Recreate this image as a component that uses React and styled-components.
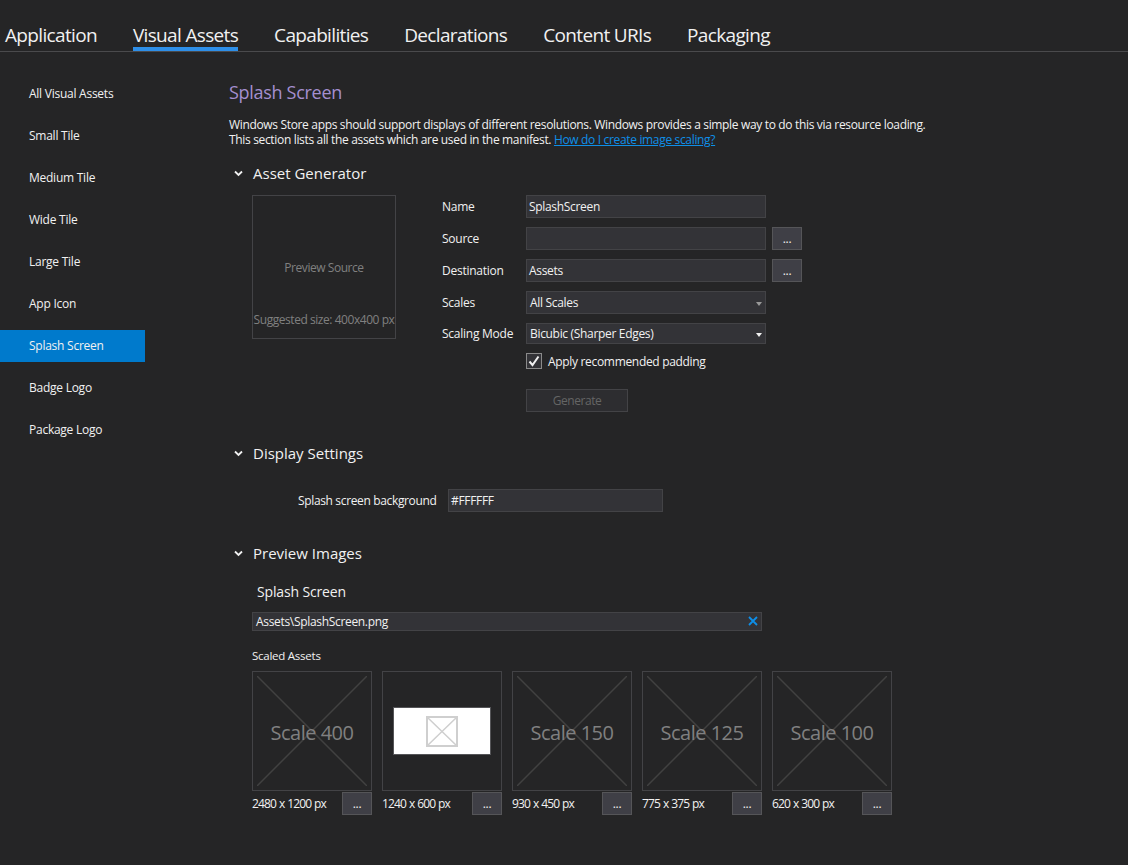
import React from "react";
import styled, { createGlobalStyle } from "styled-components";

const GlobalStyle = createGlobalStyle`
  html, body {
    margin: 0;
    background: #252526;
  }
  * {
    box-sizing: border-box;
  }
`;

const tabs = ["Application", "Visual Assets", "Capabilities", "Declarations", "Content URIs", "Packaging"];
const sideItems = [
  "All Visual Assets",
  "Small Tile",
  "Medium Tile",
  "Wide Tile",
  "Large Tile",
  "App Icon",
  "Splash Screen",
  "Badge Logo",
  "Package Logo",
];
const scaleTiles = [
  { scale: "Scale 400", size: "2480 x 1200 px" },
  { scale: null, size: "1240 x 600 px" },
  { scale: "Scale 150", size: "930 x 450 px" },
  { scale: "Scale 125", size: "775 x 375 px" },
  { scale: "Scale 100", size: "620 x 300 px" },
];

const Chevron = () => (
  <ChevronWrap width="9" height="7" viewBox="0 0 9 7">
    <path d="M1 1.5 L4.5 5 L8 1.5" fill="none" stroke="#f1f1f1" strokeWidth="1.8" />
  </ChevronWrap>
);

const Cross = ({ color }) => (
  <CrossSvg viewBox="0 0 100 100" preserveAspectRatio="none">
    <path d="M0 0 L100 100 M100 0 L0 100" stroke={color} strokeWidth="1.5" vectorEffect="non-scaling-stroke" fill="none" />
  </CrossSvg>
);

const Select = ({ value, dim }) => (
  <SelectBox $dim={dim}>
    {value}
    <Arrow $dim={dim} />
  </SelectBox>
);

export default function App() {
  return (
    <Page>
      <GlobalStyle />
      <TabBar>
        {tabs.map((t) => (
          <Tab key={t} $active={t === "Visual Assets"}>
            {t}
          </Tab>
        ))}
      </TabBar>
      <Body>
        <Sidebar>
          {sideItems.map((s) => (
            <SideItem key={s} $active={s === "Splash Screen"}>
              {s}
            </SideItem>
          ))}
        </Sidebar>
        <Main>
          <Title>Splash Screen</Title>
          <Description>
            Windows Store apps should support displays of different resolutions. Windows provides a simple way to do this via resource loading.
            <br />
            This section lists all the assets which are used in the manifest. <DocLink>How do I create image scaling?</DocLink>
          </Description>

          <SectionHead>
            <Chevron />
            Asset Generator
          </SectionHead>
          <Generator>
            <PreviewSource>
              <PreviewLabel>Preview Source</PreviewLabel>
              <SuggestedSize>Suggested size: 400x400 px</SuggestedSize>
            </PreviewSource>
            <FormGrid>
              <FieldLabel>Name</FieldLabel>
              <TextBox>SplashScreen</TextBox>
              <span />
              <FieldLabel>Source</FieldLabel>
              <TextBox />
              <BrowseButton>...</BrowseButton>
              <FieldLabel>Destination</FieldLabel>
              <TextBox>Assets</TextBox>
              <BrowseButton>...</BrowseButton>
              <FieldLabel>Scales</FieldLabel>
              <Select value="All Scales" dim />
              <span />
              <FieldLabel>Scaling Mode</FieldLabel>
              <Select value="Bicubic (Sharper Edges)" />
              <span />
              <span />
              <CheckRow>
                <CheckBox>
                  <svg width="14" height="14" viewBox="0 0 14 14">
                    <path d="M2.5 7.5 L5.5 11 L11.5 2.5" fill="none" stroke="#f1f1f1" strokeWidth="2" />
                  </svg>
                </CheckBox>
                Apply recommended padding
              </CheckRow>
              <span />
              <span />
              <GenerateButton>Generate</GenerateButton>
            </FormGrid>
          </Generator>

          <DisplayHead>
            <Chevron />
            Display Settings
          </DisplayHead>
          <BackgroundRow>
            <BackgroundLabel>Splash screen background</BackgroundLabel>
            <ColorBox>#FFFFFF</ColorBox>
          </BackgroundRow>

          <PreviewHead>
            <Chevron />
            Preview Images
          </PreviewHead>
          <PreviewBody>
            <SubTitle>Splash Screen</SubTitle>
            <FileBox>
              Assets\SplashScreen.png
              <ClearIcon width="10" height="10" viewBox="0 0 10 10">
                <path d="M1 1 L9 9 M9 1 L1 9" stroke="#0e8fe8" strokeWidth="1.8" fill="none" />
              </ClearIcon>
            </FileBox>
            <ScaledLabel>Scaled Assets</ScaledLabel>
            <TileRow>
              {scaleTiles.map((t) => (
                <TileColumn key={t.size}>
                  <Tile>
                    {t.scale ? (
                      <>
                        <TileCross>
                          <Cross color="#414141" />
                        </TileCross>
                        <ScaleText>{t.scale}</ScaleText>
                      </>
                    ) : (
                      <WhiteImage>
                        <ImageIcon>
                          <Cross color="#cfcfcf" />
                        </ImageIcon>
                      </WhiteImage>
                    )}
                  </Tile>
                  <TileFooter>
                    <TileSize>{t.size}</TileSize>
                    <BrowseButton>...</BrowseButton>
                  </TileFooter>
                </TileColumn>
              ))}
            </TileRow>
          </PreviewBody>
        </Main>
      </Body>
    </Page>
  );
}

const Page = styled.div`
  width: 1128px;
  height: 865px;
  overflow: hidden;
  background: #252526;
  color: #f1f1f1;
  font-family: "Open Sans", "Noto Sans", sans-serif;
  font-size: 12px;
  letter-spacing: -0.32px;
`;

const TabBar = styled.div`
  height: 52px;
  display: flex;
  gap: 36px;
  padding-left: 5px;
  border-bottom: 1px solid #4a4a4c;
`;

const Tab = styled.div`
  height: 51px;
  padding-top: 21px;
  font-size: 19px;
  line-height: 28px;
  letter-spacing: -0.66px;
  color: #f1f1f1;
  border-bottom: 4px solid ${(p) => (p.$active ? "#2e8fe8" : "transparent")};
`;

const Body = styled.div`
  display: flex;
`;

const Sidebar = styled.div`
  width: 145px;
  padding-top: 26px;
  display: flex;
  flex-direction: column;
  gap: 10px;
`;

const SideItem = styled.div`
  height: 32px;
  line-height: 32px;
  padding-left: 29px;
  letter-spacing: -0.25px;
  background: ${(p) => (p.$active ? "#007acc" : "transparent")};
`;

const Main = styled.div`
  padding-left: 84px;
  padding-top: 26px;
  flex: 1;
`;

const Title = styled.div`
  font-size: 18px;
  line-height: 28px;
  letter-spacing: -0.3px;
  color: #a48fd0;
`;

const Description = styled.div`
  margin-top: 11px;
  line-height: 15px;
  letter-spacing: -0.335px;
`;

const DocLink = styled.span`
  color: #0e8fe8;
  text-decoration: underline;
`;

const SectionHead = styled.div`
  display: flex;
  align-items: center;
  height: 24px;
  margin-top: 14px;
  font-size: 15px;
  letter-spacing: 0;
`;

const ChevronWrap = styled.svg`
  margin-left: 5px;
  margin-right: 10px;
  flex: none;
`;

const Generator = styled.div`
  display: flex;
  margin-top: 10px;
  margin-left: 23px;
  gap: 46px;
`;

const PreviewSource = styled.div`
  width: 144px;
  height: 144px;
  border: 1px solid #434346;
  color: #808080;
  text-align: center;
  letter-spacing: -0.45px;
`;

const PreviewLabel = styled.div`
  margin-top: 64px;
  line-height: 16px;
`;

const SuggestedSize = styled.div`
  margin-top: 36px;
  line-height: 16px;
  white-space: nowrap;
`;

const FormGrid = styled.div`
  display: grid;
  grid-template-columns: 84px 240px 30px;
  grid-template-rows: 23px 23px 23px 23px 21px 16px 34px;
  row-gap: 9px;
  align-items: center;
`;

const FieldLabel = styled.div`
  line-height: 21px;
  letter-spacing: -0.25px;
`;

const TextBox = styled.div`
  height: 23px;
  line-height: 21px;
  padding-left: 2px;
  background: #333337;
  border: 1px solid #434346;
`;

const BrowseButton = styled.div`
  width: 30px;
  height: 23px;
  margin-left: 6px;
  flex: none;
  line-height: 21px;
  text-align: center;
  background: #3f3f46;
  border: 1px solid #555558;
`;

const SelectBox = styled.div`
  height: 100%;
  display: flex;
  align-items: center;
  padding-left: 3px;
  background: #333337;
  border: 1px solid #434346;
  position: relative;
`;

const Arrow = styled.span`
  position: absolute;
  right: 3px;
  top: 50%;
  margin-top: -1px;
  width: 0;
  height: 0;
  border-left: 3px solid transparent;
  border-right: 3px solid transparent;
  border-top: 4px solid ${(p) => (p.$dim ? "#999999" : "#f1f1f1")};
`;

const CheckRow = styled.div`
  display: flex;
  align-items: center;
  gap: 6px;
  white-space: nowrap;
`;

const CheckBox = styled.div`
  width: 16px;
  height: 16px;
  border: 1px solid #8a8a8a;
  background: #333337;
  display: flex;
  align-items: center;
  justify-content: center;
`;

const GenerateButton = styled.div`
  width: 102px;
  height: 23px;
  align-self: end;
  line-height: 21px;
  text-align: center;
  letter-spacing: -0.45px;
  color: #656565;
  background: #2d2d30;
  border: 1px solid #434346;
`;

const DisplayHead = styled(SectionHead)`
  margin-top: 29px;
`;

const BackgroundRow = styled.div`
  display: flex;
  align-items: center;
  margin-top: 24px;
  margin-left: 69px;
  gap: 12px;
`;

const BackgroundLabel = styled.div`
  white-space: nowrap;
  width: 138px;
  letter-spacing: -0.35px;
`;

const ColorBox = styled(TextBox)`
  width: 215px;
`;

const PreviewHead = styled(SectionHead)`
  margin-top: 29px;
`;

const PreviewBody = styled.div`
  margin-left: 23px;
`;

const SubTitle = styled.div`
  margin-left: 5px;
  margin-top: 17px;
  font-size: 14px;
  line-height: 20px;
  letter-spacing: -0.15px;
`;

const FileBox = styled.div`
  width: 510px;
  height: 19px;
  margin-top: 10px;
  line-height: 17px;
  padding-left: 3px;
  background: #333337;
  border: 1px solid #434346;
  position: relative;
`;

const ClearIcon = styled.svg`
  position: absolute;
  right: 3px;
  top: 3px;
`;

const ScaledLabel = styled.div`
  margin-top: 17px;
  line-height: 16px;
  font-size: 11.5px;
  letter-spacing: -0.25px;
`;

const TileRow = styled.div`
  display: flex;
  gap: 10px;
  margin-top: 7px;
`;

const TileColumn = styled.div`
  width: 120px;
`;

const Tile = styled.div`
  width: 120px;
  height: 120px;
  border: 1px solid #434346;
  position: relative;
  display: flex;
  align-items: center;
  justify-content: center;
`;

const TileCross = styled.div`
  position: absolute;
  inset: 4px;
`;

const CrossSvg = styled.svg`
  display: block;
  width: 100%;
  height: 100%;
`;

const ScaleText = styled.div`
  position: relative;
  padding-top: 2px;
  font-size: 20px;
  letter-spacing: -0.5px;
  color: #808080;
`;

const WhiteImage = styled.div`
  width: 98px;
  height: 48px;
  background: #ffffff;
  border: 1px solid #555558;
  display: flex;
  align-items: center;
  justify-content: center;
`;

const ImageIcon = styled.div`
  width: 32px;
  height: 31px;
  border: 2px solid #cfcfcf;
`;

const TileFooter = styled.div`
  display: flex;
  align-items: center;
  justify-content: space-between;
  margin-top: 1px;
`;

const TileSize = styled.div`
  line-height: 23px;
  letter-spacing: -0.85px;
  word-spacing: 0.6px;
  white-space: nowrap;
`;
